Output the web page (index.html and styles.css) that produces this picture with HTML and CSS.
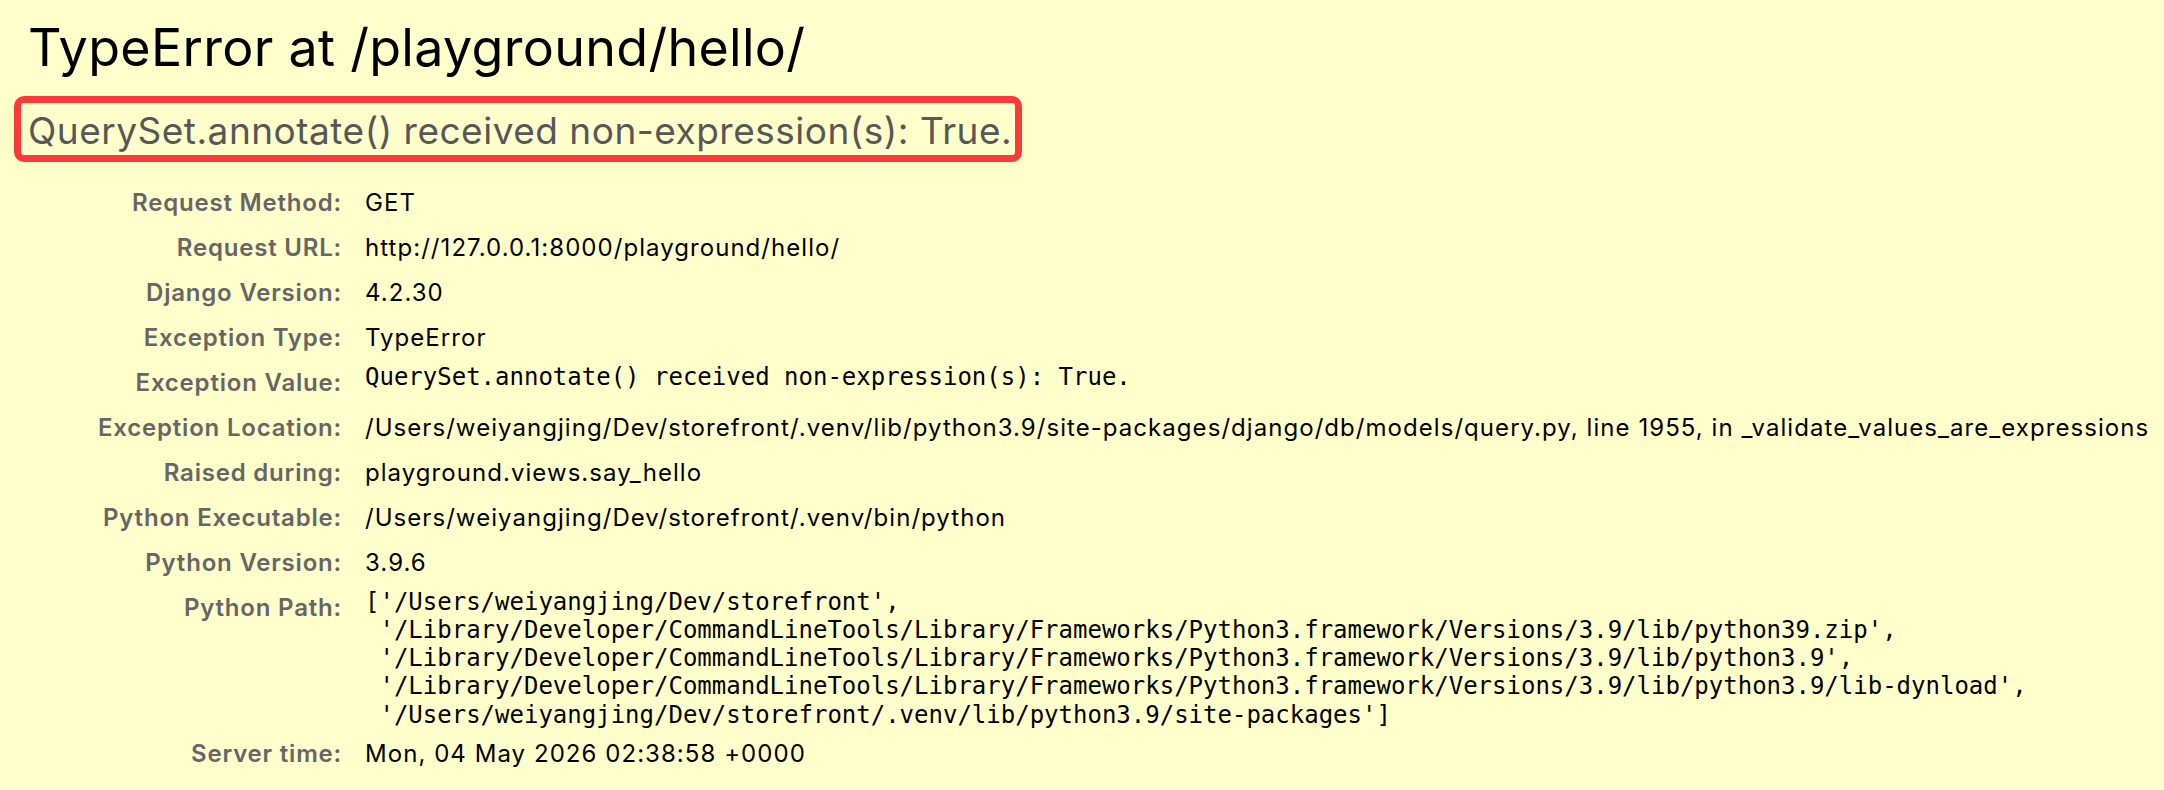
FILE: index.html
```html
<!DOCTYPE html>
<html lang="en">
<head>
<meta charset="utf-8">
<title>TypeError at /playground/hello/</title>
<link rel="stylesheet" href="styles.css">
</head>
<body>
<div class="summary">
  <h1 class="title">TypeError at /playground/hello/</h1>
  <pre class="exception-value">QuerySet.annotate() received non-expression(s): True.</pre>
  <table class="meta">
    <tbody>
      <tr><th>Request Method:</th><td>GET</td></tr>
      <tr><th>Request URL:</th><td>http://127.0.0.1:8000/playground/hello/</td></tr>
      <tr><th>Django Version:</th><td>4.2.30</td></tr>
      <tr><th>Exception Type:</th><td>TypeError</td></tr>
      <tr><th>Exception Value:</th><td><pre class="code">QuerySet.annotate() received non-expression(s): True.</pre></td></tr>
      <tr><th>Exception Location:</th><td><span class="fname">/Users/weiyangjing/Dev/storefront/.venv/lib/python3.9/site-packages/django/db/models/query.py</span>, line 1955, in _validate_values_are_expressions</td></tr>
      <tr><th>Raised during:</th><td>playground.views.say_hello</td></tr>
      <tr><th>Python Executable:</th><td>/Users/weiyangjing/Dev/storefront/.venv/bin/python</td></tr>
      <tr><th>Python Version:</th><td>3.9.6</td></tr>
      <tr><th>Python Path:</th><td><pre class="code">['/Users/weiyangjing/Dev/storefront',
 '/Library/Developer/CommandLineTools/Library/Frameworks/Python3.framework/Versions/3.9/lib/python39.zip',
 '/Library/Developer/CommandLineTools/Library/Frameworks/Python3.framework/Versions/3.9/lib/python3.9',
 '/Library/Developer/CommandLineTools/Library/Frameworks/Python3.framework/Versions/3.9/lib/python3.9/lib-dynload',
 '/Users/weiyangjing/Dev/storefront/.venv/lib/python3.9/site-packages']</pre></td></tr>
      <tr><th>Server time:</th><td>Mon, 04 May 2026 02:38:58 +0000</td></tr>
    </tbody>
  </table>
</div>
</body>
</html>
```

FILE: styles.css
```css
html, body {
  margin: 0;
  padding: 0;
}

body {
  background: #ffffcc;
  color: #000;
  font-family: Inter, "Liberation Sans", sans-serif;
  min-height: 790px;
}

.summary {
  padding: 18px 4px 20px 28px;
  background: #ffffcc;
}

.title {
  margin: 0;
  font-size: 52px;
  line-height: 60px;
  letter-spacing: 0.3px;
  font-weight: normal;
  color: #000;
}

.exception-value {
  margin: 18px 0 0 -14px;
  width: fit-content;
  padding: 4px 3px 0 7px;
  border: 7px solid #fb3a3a;
  border-radius: 10px;
  font-family: Inter, "Liberation Sans", sans-serif;
  font-size: 37px;
  line-height: 48px;
  letter-spacing: 0.5px;
  color: #575757;
  white-space: pre;
}

.meta {
  margin-top: 18px;
  border-collapse: collapse;
  border: none;
  font-size: 24px;
}

.meta th,
.meta td {
  vertical-align: top;
  line-height: 40px;
  padding-top: 2.5px;
  padding-bottom: 2.5px;
}

.meta th {
  width: 311px;
  padding-left: 3px;
  padding-right: 12px;
  text-align: right;
  color: #666;
  font-weight: 600;
  letter-spacing: 0.8px;
  white-space: nowrap;
}

.meta td {
  padding-left: 11px;
  padding-right: 0;
  color: #000;
  letter-spacing: 1.05px;
  white-space: nowrap;
}

.code {
  margin: 0;
  font-family: "DejaVu Sans Mono", "Liberation Mono", monospace;
  font-size: 24px;
  line-height: 28.33px;
  letter-spacing: 0;
  white-space: pre;
}
```
